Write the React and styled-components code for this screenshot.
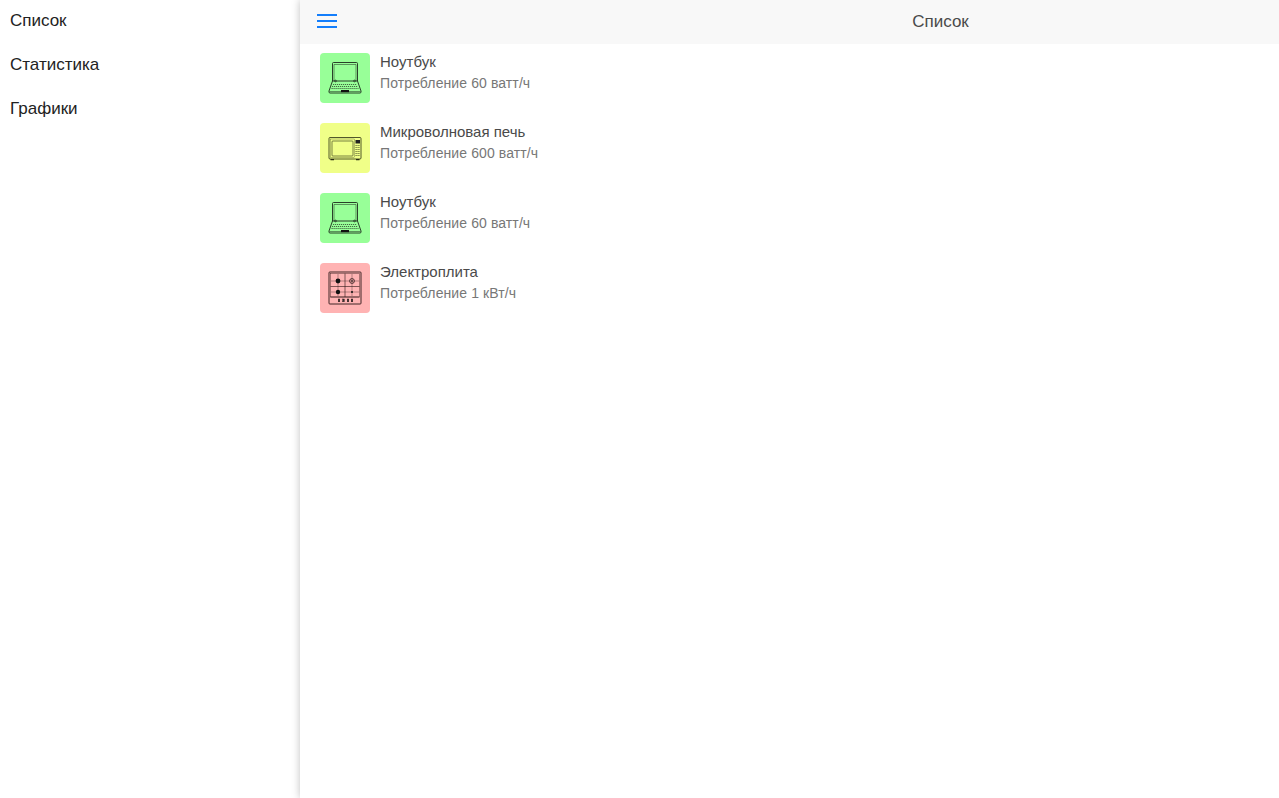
import React from "react";
import styled, { createGlobalStyle } from "styled-components";

const GlobalStyle = createGlobalStyle`
  html, body {
    margin: 0;
    padding: 0;
    height: 100%;
    background: #fff;
    font-family: "Liberation Sans", Arial, sans-serif;
  }
  #root {
    height: 100%;
  }
`;

const Layout = styled.div`
  display: flex;
  width: 1279px;
  height: 798px;
  overflow: hidden;
`;

const Drawer = styled.nav`
  width: 300px;
  flex-shrink: 0;
  display: flex;
  flex-direction: column;
`;

const DrawerItem = styled.div`
  height: 44px;
  line-height: 41px;
  padding-left: 10px;
  font-size: 17px;
  color: #222;
`;

/* the content slides right with the drawer open, so it keeps the full page width */
const Main = styled.main`
  width: 1279px;
  flex-shrink: 0;
  display: flex;
  flex-direction: column;
  background: #fff;
  box-shadow: 0 0 8px rgba(0, 0, 0, 0.25);
  z-index: 1;
`;

const Header = styled.header`
  height: 44px;
  display: flex;
  align-items: center;
  flex-shrink: 0;
  background: #f8f8f8;
`;

const MenuButton = styled.button`
  width: 20px;
  height: 14px;
  margin: 0 0 2px 17px;
  padding: 0;
  border: 0;
  background: none;
  display: flex;
  flex-direction: column;
  justify-content: space-between;
`;

const MenuLine = styled.span`
  display: block;
  height: 2px;
  background: #147efb;
`;

const HeaderTitle = styled.h1`
  flex: 1;
  margin: 0 0 0 -35px;
  text-align: center;
  font-size: 17px;
  font-weight: 400;
  color: #4a4a4a;
`;

const List = styled.ul`
  list-style: none;
  margin: 0;
  padding: 9px 0 0 20px;
  display: flex;
  flex-direction: column;
  gap: 20px;
`;

const Row = styled.li`
  display: flex;
  height: 50px;
  gap: 10px;
`;

const Tile = styled.div`
  width: 50px;
  height: 50px;
  border-radius: 4px;
  display: flex;
  align-items: center;
  justify-content: center;
  background: ${(p) => p.$color};
`;

const Texts = styled.div`
  display: flex;
  flex-direction: column;
`;

const Name = styled.div`
  font-size: 15px;
  line-height: 18px;
  color: #4a4a4a;
`;

const Usage = styled.div`
  font-size: 14px;
  letter-spacing: 0.1px;
  line-height: 18px;
  margin-top: 3px;
  color: #777;
`;

const LaptopIcon = () => (
  <svg width="34" height="34" viewBox="0 0 34 34" fill="none" stroke="#1c2a1c" strokeWidth="0.9">
    <path d="M4.500 20V2.500a1 1 0 0 1 1-1h23a1 1 0 0 1 1 1V20" />
    <path d="M6 20V3.500h22V20" strokeWidth="0.5" />
    <path d="M4.500 20h25l3.500 10v1a1 1 0 0 1-1 1H2a1 1 0 0 1-1-1v-1z" />
    <path d="M5 23.500h24M4 25.500h26M3.500 27.500h27" strokeWidth="0.7" strokeDasharray="1.200 0.800" />
    <path d="M1.500 30.500h31" strokeWidth="0.5" />
    <rect x="13" y="29" width="8" height="2.200" fill="#111" stroke="none" />
    <circle cx="7.500" cy="20" r="0.900" strokeWidth="0.7" />
    <circle cx="26.500" cy="20" r="0.900" strokeWidth="0.7" />
  </svg>
);

const MicrowaveIcon = () => (
  <svg width="34" height="34" viewBox="0 0 34 34" fill="none" stroke="#2a2d12" strokeWidth="0.8">
    <rect x="1" y="6.500" width="32" height="21.500" rx="1" />
    <rect x="4" y="10" width="21" height="15" rx="0.800" strokeWidth="0.6" />
    <rect x="2.500" y="8" width="24" height="18.500" strokeWidth="0.3" />
    <rect x="27.500" y="9" width="4.500" height="3.500" fill="#222" stroke="none" />
    <path d="M27.500 14.500h4.500M27.500 16.500h4.500M27.500 18.500h4.500M27.500 20.500h4.500M27.500 22.500h4.500M27.500 24.500h4.500" strokeWidth="0.7" strokeDasharray="1.200 0.800" />
    <path d="M2.500 28.700h3.500M28 28.700h3.500" strokeWidth="1.200" />
  </svg>
);

const StoveIcon = () => (
  <svg width="34" height="34" viewBox="0 0 34 34" fill="none" stroke="#2a1616" strokeWidth="0.9">
    <rect x="1" y="1" width="32" height="32" rx="0.800" />
    <rect x="2.500" y="2.500" width="29" height="23.500" strokeWidth="0.4" />
    <path d="M2.500 26h29" strokeWidth="0.7" />
    <path d="M17 2.500V26M2.500 15.500h29" strokeWidth="0.6" />
    <path d="M10 3v22M24 3v22M3 10h28M3 21h28" strokeWidth="0.35" />
    <circle cx="10" cy="10" r="2.400" fill="#111" stroke="none" />
    <circle cx="10" cy="21" r="2.200" fill="#111" stroke="none" />
    <circle cx="24" cy="10" r="2.400" strokeWidth="0.8" />
    <circle cx="24" cy="10" r="0.800" fill="#111" stroke="none" />
    <circle cx="24" cy="21" r="1" fill="#111" stroke="none" />
    <rect x="10.200" y="28" width="1.600" height="2.800" fill="#333" strokeWidth="0.4" />
    <rect x="14.700" y="28" width="1.600" height="2.800" fill="#333" strokeWidth="0.4" />
    <rect x="19.200" y="28" width="1.600" height="2.800" fill="#333" strokeWidth="0.4" />
    <rect x="23.200" y="28" width="1.600" height="2.800" fill="#333" strokeWidth="0.4" />
  </svg>
);

const devices = [
  { id: 1, name: "Ноутбук", usage: "Потребление 60 ватт/ч", color: "#98ff98", Icon: LaptopIcon },
  { id: 2, name: "Микроволновая печь", usage: "Потребление 600 ватт/ч", color: "#f0ff88", Icon: MicrowaveIcon },
  { id: 3, name: "Ноутбук", usage: "Потребление 60 ватт/ч", color: "#98ff98", Icon: LaptopIcon },
  { id: 4, name: "Электроплита", usage: "Потребление 1 кВт/ч", color: "#ffb3b3", Icon: StoveIcon },
];

const App = () => {
  return (
    <Layout>
      <GlobalStyle />
      <Drawer>
        <DrawerItem>Список</DrawerItem>
        <DrawerItem>Статистика</DrawerItem>
        <DrawerItem>Графики</DrawerItem>
      </Drawer>
      <Main>
        <Header>
          <MenuButton aria-label="Меню">
            <MenuLine />
            <MenuLine />
            <MenuLine />
          </MenuButton>
          <HeaderTitle>Список</HeaderTitle>
        </Header>
        <List>
          {devices.map(({ id, name, usage, color, Icon }) => (
            <Row key={id}>
              <Tile $color={color}>
                <Icon />
              </Tile>
              <Texts>
                <Name>{name}</Name>
                <Usage>{usage}</Usage>
              </Texts>
            </Row>
          ))}
        </List>
      </Main>
    </Layout>
  );
};

export default App;
